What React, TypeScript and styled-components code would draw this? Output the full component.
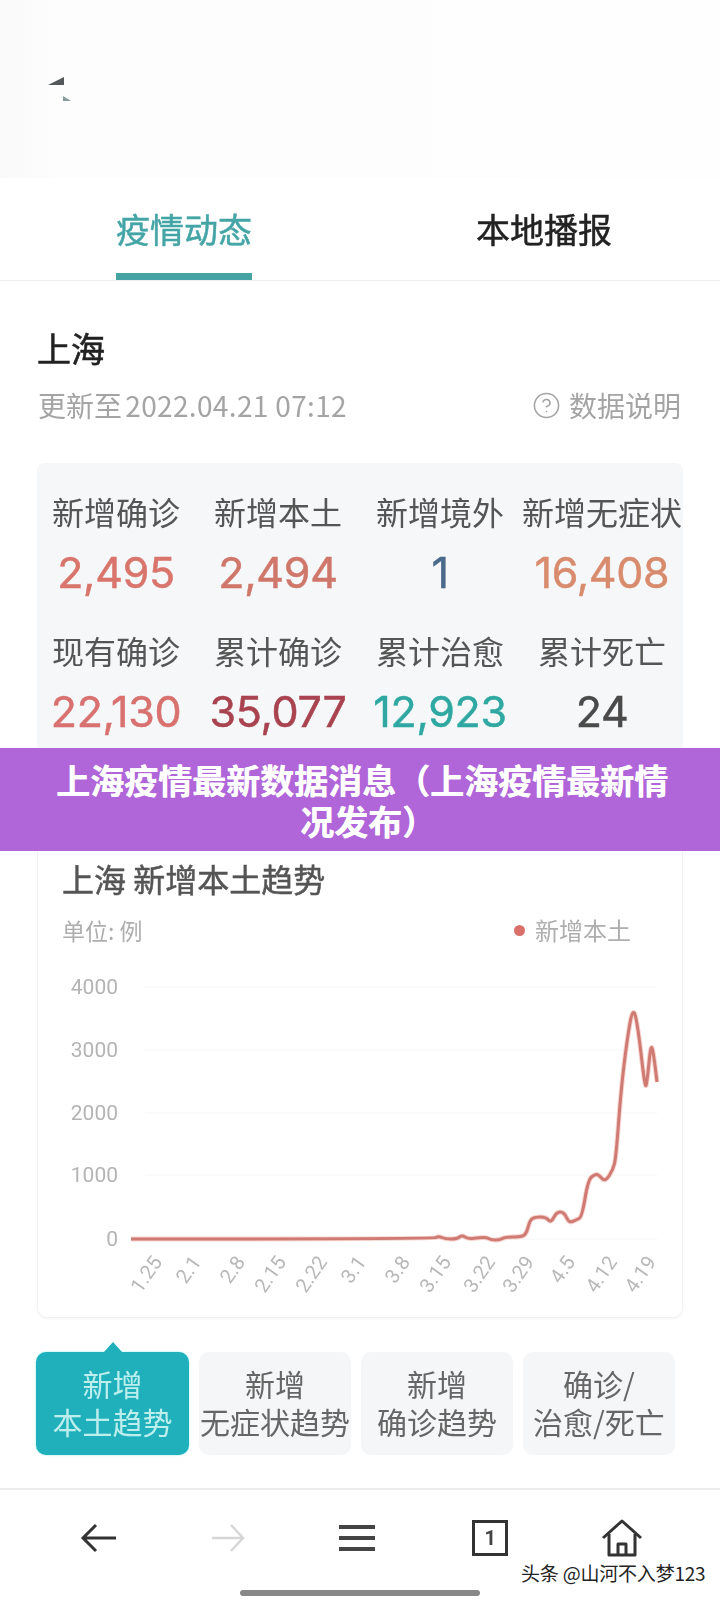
import React from 'react';
import styled, { createGlobalStyle } from 'styled-components';
import { CircleHelp } from 'lucide-react';

const FONT = `"Noto Sans CJK SC", "Noto Sans", sans-serif`;

interface Stat {
  label: string
  value: string
  color: string
}

const stats: Stat[] = [
  { label: '新增确诊', value: '2,495', color: '#d9756c' },
  { label: '新增本土', value: '2,494', color: '#d0776b' },
  { label: '新增境外', value: '1', color: '#4a6a8c' },
  { label: '新增无症状', value: '16,408', color: '#d98b6e' },
  { label: '现有确诊', value: '22,130', color: '#d8716f' },
  { label: '累计确诊', value: '35,077', color: '#a8434f' },
  { label: '累计治愈', value: '12,923', color: '#2fa8a2' },
  { label: '累计死亡', value: '24', color: '#4a4a4a' },
];

const yTicks = [
  { label: '4000', y: 987 },
  { label: '3000', y: 1050 },
  { label: '2000', y: 1113 },
  { label: '1000', y: 1175 },
  { label: '0', y: 1239 },
];

const xTicks = [
  { label: '1.25', x: 163 },
  { label: '2.1', x: 202 },
  { label: '2.8', x: 246 },
  { label: '2.15', x: 287 },
  { label: '2.22', x: 328 },
  { label: '3.1', x: 367 },
  { label: '3.8', x: 411 },
  { label: '3.15', x: 452 },
  { label: '3.22', x: 496 },
  { label: '3.29', x: 535 },
  { label: '4.5', x: 576 },
  { label: '4.12', x: 618 },
  { label: '4.19', x: 657 },
];

// traced from the curve, [x, y] in page pixels
const curve: [number, number][] = [
  [131, 1239], [434, 1239], [438.5, 1236], [445, 1239], [457, 1239], [462, 1235], [468, 1239],
  [480, 1237.5], [487, 1237.5], [491, 1240], [500, 1240], [505, 1237], [519, 1237], [526, 1235],
  [530, 1220], [535, 1217], [546, 1217], [551, 1223], [556.5, 1212], [564, 1212], [569, 1223],
  [576, 1220], [582, 1217], [588, 1180], [595, 1174], [599, 1175], [605, 1182], [613, 1170],
  [616, 1157], [621, 1090], [627, 1040], [633, 1006], [638, 1027], [645, 1088], [647, 1083],
  [651, 1042], [654, 1057], [657, 1082],
];

const curvePath = () => {
  let d = `M${curve[0][0]} ${curve[0][1]}`;
  for (let i = 1; i < curve.length - 1; i++) {
    const [x, y] = curve[i];
    const [nx, ny] = curve[i + 1];
    d += ` Q${x} ${y} ${(x + nx) / 2} ${(y + ny) / 2}`;
  }
  const last = curve[curve.length - 1];
  return `${d} L${last[0]} ${last[1]}`;
};

const buttons = [
  { id: 1, top: '新增', bottom: '本土趋势', active: true },
  { id: 2, top: '新增', bottom: '无症状趋势', active: false },
  { id: 3, top: '新增', bottom: '确诊趋势', active: false },
  { id: 4, top: '确诊/', bottom: '治愈/死亡', active: false },
];

const App: React.FC = () => {
  return (
    <Page>
      <GlobalStyle />
      <Soft>
        <TopBlank>
          <svg width="24" height="26" viewBox="0 0 24 26">
            <path d="M0 8 L16 0 L16 8 Z" fill="#55585a" />
            <path d="M15 19 L23 24 L15 24 Z" fill="#8a9a9c" />
          </svg>
        </TopBlank>
        <Tabs>
          <Tab $active>疫情动态</Tab>
          <Tab>本地播报</Tab>
        </Tabs>
        <Section>
          <City>上海</City>
          <MetaRow>
            <span>更新至 <DateText>2022.04.21 07:12</DateText></span>
            <Note>
              <CircleHelp size={29} strokeWidth={1.3} />
              数据说明
            </Note>
          </MetaRow>
          <StatsCard>
            <StatsGrid>
              {stats.map((s) => (
                <StatCell key={s.label}>
                  <StatLabel>{s.label}</StatLabel>
                  <StatValue $color={s.color}>{s.value}</StatValue>
                </StatCell>
              ))}
            </StatsGrid>
          </StatsCard>
          <ChartCard>
            <ChartTitle>上海 新增本土趋势</ChartTitle>
            <ChartMeta>
              <span>单位: 例</span>
              <Legend>新增本土</Legend>
            </ChartMeta>
            <ChartSvg viewBox="38 966 645 350" width="645" height="350">
              {yTicks.map((t) => (
                <g key={t.label}>
                  <line x1="145" x2="657" y1={t.y} y2={t.y} stroke="#f6f6f6" strokeWidth="1" />
                  <text x="118" y={t.y + 7} textAnchor="end" fontSize="21" fill="#b4b4b4">{t.label}</text>
                </g>
              ))}
              {xTicks.map((t) => (
                <text
                  key={t.label}
                  x={t.x}
                  y={1262}
                  textAnchor="end"
                  fontSize="20"
                  fill="#b8b8b8"
                  transform={`rotate(-55 ${t.x} 1262)`}
                >
                  {t.label}
                </text>
              ))}
              <path d={curvePath()} fill="none" stroke="#f6d5d0" strokeWidth="5" strokeLinejoin="round" />
              <path d={curvePath()} fill="none" stroke="#cf7a73" strokeWidth="3" strokeLinejoin="round" />
            </ChartSvg>
          </ChartCard>
          <TrendRow>
            {buttons.map((b) => (
              <TrendButton key={b.id} $active={b.active}>
                {b.top}
                <br />
                {b.bottom}
              </TrendButton>
            ))}
          </TrendRow>
        </Section>
        <BottomNav>
          <svg width="38" height="30" viewBox="0 0 38 30" fill="none" stroke="#333" strokeWidth="3">
            <path d="M36 15 H3 M16 2 L3 15 L16 28" />
          </svg>
          <svg width="34" height="30" viewBox="0 0 34 30" fill="none" stroke="#d6d6d6" strokeWidth="2.5">
            <path d="M1 15 H32 M20 2 L32 15 L20 28" />
          </svg>
          <svg width="38" height="28" viewBox="0 0 38 28" fill="#444">
            <rect x="1" y="1" width="36" height="4" />
            <rect x="1" y="12" width="36" height="4" />
            <rect x="1" y="23" width="36" height="4" />
          </svg>
          <TabCount>1</TabCount>
          <svg width="42" height="38" viewBox="0 0 42 38" fill="none" stroke="#333" strokeWidth="3" strokeLinejoin="round">
            <path d="M2 19 L21 2 L40 19" />
            <path d="M8 15 V36 H34 V15" />
            <path d="M17 36 V25 H25 V36" />
          </svg>
        </BottomNav>
        <HomeBar />
      </Soft>
      <Banner>
        上海疫情最新数据消息（上海疫情最新情
        <br />
        <BannerTail>况发布）</BannerTail>
      </Banner>
      <Watermark>头条 @山河不入梦123</Watermark>
    </Page>
  );
};

const GlobalStyle = createGlobalStyle`
  html, body {
    margin: 0;
    padding: 0;
    background: #fff;
  }
  * {
    box-sizing: border-box;
  }
`;

const Page = styled.div`
  position: relative;
  width: 720px;
  height: 1600px;
  overflow: hidden;
  background: #fff;
  font-family: ${FONT};
`;

const Soft = styled.div`
  filter: blur(0.7px);
`;

const TopBlank = styled.div`
  height: 178px;
  padding: 77px 0 0 48px;
  background: linear-gradient(90deg, #f9f9f9 0, #fdfdfd 8%, #fefefe 100%);
`;

const Tabs = styled.div`
  display: grid;
  grid-template-columns: 368px 352px;
  height: 103px;
  border-bottom: 1px solid #efefef;
`;

const Tab = styled.div<{ $active?: boolean }>`
  position: relative;
  justify-self: center;
  height: 102px;
  padding-top: 26px;
  font-size: 34px;
  line-height: 50px;
  color: ${(p) => (p.$active ? '#45a5a6' : '#222')};
  -webkit-text-stroke: 0.5px currentColor;
  border-bottom: ${(p) => (p.$active ? '7px solid #45a3a3' : 'none')};
`;

const Section = styled.div`
  padding: 0 37px;
`;

const City = styled.div`
  margin-top: 42px;
  font-size: 34px;
  line-height: 50px;
  color: #222;
  -webkit-text-stroke: 0.6px currentColor;
`;

const MetaRow = styled.div`
  display: flex;
  justify-content: space-between;
  align-items: center;
  margin-top: 12px;
  padding: 0 2px 0 1px;
  font-size: 28px;
  line-height: 40px;
  color: #a4a4a4;
`;

const DateText = styled.span`
  margin-left: -3px;
  letter-spacing: 0.35px;
`;

const Note = styled.span`
  display: flex;
  align-items: center;
  gap: 8px;
`;

const StatsCard = styled.div`
  height: 300px;
  margin-top: 38px;
  padding-top: 25px;
  border-radius: 8px;
  background: #f5f7f8;
`;

const StatsGrid = styled.div`
  display: grid;
  grid-template-columns: repeat(4, 162px);
  margin-left: -2px;
  row-gap: 27px;
`;

const StatCell = styled.div`
  display: flex;
  flex-direction: column;
  align-items: center;
`;

const StatLabel = styled.div`
  font-size: 32px;
  line-height: 46px;
  color: #555;
  white-space: nowrap;
`;

const StatValue = styled.div<{ $color: string }>`
  margin-top: 10px;
  font-family: Inter, sans-serif;
  font-size: 43px;
  line-height: 56px;
  letter-spacing: -0.3px;
  color: ${(p) => p.$color};
  -webkit-text-stroke: 0.5px currentColor;
`;

const ChartCard = styled.div`
  height: 487px;
  margin-top: 68px;
  padding: 24px 0 0;
  border: 1px solid #f0f0f0;
  border-radius: 10px;
  box-shadow: 0 1px 3px rgba(0, 0, 0, 0.04);
  background: #fff;
`;

const ChartTitle = styled.div`
  margin-left: 24px;
  font-size: 32px;
  line-height: 44px;
  color: #555;
  -webkit-text-stroke: 0.5px currentColor;
`;

const ChartMeta = styled.div`
  display: flex;
  justify-content: space-between;
  align-items: center;
  margin: 12px 51px 0 24px;
  font-size: 23px;
  line-height: 36px;
  color: #aeaeae;
`;

const Legend = styled.span`
  display: flex;
  align-items: center;
  gap: 10px;
  font-size: 24px;

  &::before {
    content: '';
    width: 11px;
    height: 11px;
    border-radius: 50%;
    background: #d9706a;
  }
`;

const ChartSvg = styled.svg`
  display: block;
  margin-top: 18px;
  font-family: Roboto, sans-serif;
`;

const TrendRow = styled.div`
  display: flex;
  gap: 10px;
  margin-top: 34px;
  margin-left: -1px;
`;

const TrendButton = styled.div<{ $active: boolean }>`
  position: relative;
  width: ${(p) => (p.$active ? '153px' : '152px')};
  height: 103px;
  padding-top: 12px;
  border-radius: 10px;
  font-size: 30px;
  line-height: 38px;
  text-align: center;
  white-space: nowrap;
  color: ${(p) => (p.$active ? '#bdeeee' : '#666')};
  background: ${(p) => (p.$active ? '#1fb0bb' : '#f5f6f7')};
  box-shadow: ${(p) => (p.$active ? '0 0 2px #7fe8ea' : 'none')};

  ${(p) =>
    p.$active &&
    `&::before {
      content: '';
      position: absolute;
      top: -10px;
      left: 68px;
      border-left: 9px solid transparent;
      border-right: 9px solid transparent;
      border-bottom: 10px solid #1fb0bb;
    }`}
`;

const BottomNav = styled.div`
  display: flex;
  justify-content: space-between;
  align-items: center;
  height: 98px;
  margin-top: 33px;
  padding: 0 77px 0 80px;
  border-top: 2px solid #ececec;
`;

const TabCount = styled.div`
  width: 36px;
  height: 36px;
  margin-left: 4px;
  border: 3px solid #333;
  font-family: Roboto, sans-serif;
  font-size: 20px;
  font-weight: 700;
  line-height: 30px;
  text-align: center;
  color: #444;
`;

const HomeBar = styled.div`
  width: 240px;
  height: 6px;
  margin: 4px 0 0 240px;
  border-radius: 3px;
  background: #888;
`;

const Banner = styled.div`
  position: absolute;
  top: 748px;
  left: 0;
  width: 720px;
  height: 103px;
  padding: 11px 0 0 4px;
  background: #b066d9;
  color: #fff;
  font-size: 34px;
  font-weight: 700;
  line-height: 41px;
  text-align: center;
  white-space: nowrap;
  text-shadow: 0.5px 0 0 #fff;
`;

const BannerTail = styled.span`
  margin-left: 12px;
`;

const Watermark = styled.div`
  position: absolute;
  top: 1560px;
  left: 521px;
  font-size: 19px;
  line-height: 26px;
  letter-spacing: -0.2px;
  color: #222;
  white-space: nowrap;
  text-shadow: 0 0 2px #fff;
`;

export default App;
